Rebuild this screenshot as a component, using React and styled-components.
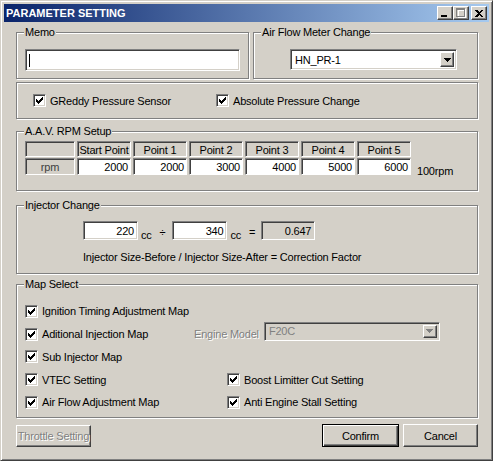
import React from 'react';
import styled, { createGlobalStyle, css } from 'styled-components';

const Global = createGlobalStyle`
  html, body { margin: 0; padding: 0; background: #D4D0C8; }
  body { font-family: "Liberation Sans", Arial, sans-serif; font-size: 11px; }
  * { box-sizing: border-box; }
`;

const sunken = css`
  border: 1px solid;
  border-color: #808080 #ffffff #ffffff #808080;
  box-shadow: inset 1px 1px 0 #404040, inset -1px -1px 0 #D4D0C8;
`;

const raised = css`
  border: 1px solid;
  border-color: #ffffff #404040 #404040 #ffffff;
  box-shadow: inset -1px -1px 0 #808080, inset 1px 1px 0 #D4D0C8;
`;

const Window = styled.div`
  width: 493px;
  height: 461px;
  background: #D4D0C8;
  border: 1px solid;
  border-color: #D4D0C8 #404040 #404040 #D4D0C8;
  box-shadow: inset 1px 1px 0 #ffffff, inset -1px -1px 0 #808080;
  padding: 3px;
  display: flex;
  flex-direction: column;
  color: #000;
  letter-spacing: -0.2px;
`;

const TitleBar = styled.div`
  height: 18px;
  flex: none;
  display: flex;
  align-items: center;
  justify-content: space-between;
  background: linear-gradient(to right, #0A246A, #A6CAF0);
  padding: 0 2px;
`;

const Title = styled.span`
  color: #fff;
  font-weight: bold;
  font-size: 11px;
  letter-spacing: 0;
`;

const Controls = styled.div`
  display: flex;
  align-items: center;
`;

const CtlButton = styled.div`
  width: 16px;
  height: 14px;
  background: #D4D0C8;
  ${raised};
  display: flex;
  align-items: center;
  justify-content: center;
  margin-left: ${p => (p.$gap ? '2px' : '0')};
`;

const Body = styled.div`
  flex: 1;
  display: flex;
  flex-direction: column;
  padding: 10px 11px 0 12px;
`;

const Group = styled.div`
  position: relative;
  height: ${p => p.$h}px;
  margin-top: ${p => p.$mt || 0}px;
  border: 1px solid #808080;
  box-shadow: inset 1px 1px 0 #ffffff, 1px 1px 0 #ffffff;
  padding: ${p => p.$pad || '0'};
  flex: none;
`;

const Legend = styled.span`
  position: absolute;
  top: -7px;
  left: 7px;
  padding: 0 1px;
  background: #D4D0C8;
  line-height: 13px;
`;

const TopRow = styled.div`
  display: grid;
  grid-template-columns: 233px 1fr;
  column-gap: 4px;
`;

const Field = styled.div`
  ${sunken};
  background: ${p => (p.$readonly ? '#D4D0C8' : '#fff')};
  width: ${p => p.$w}px;
  height: ${p => p.$h || 21}px;
  display: flex;
  align-items: center;
  justify-content: ${p => (p.$right ? 'flex-end' : 'flex-start')};
  padding: 0 3px;
  white-space: nowrap;
`;

const Caret = styled.span`
  width: 1px;
  height: 13px;
  background: #000;
`;

const Select = styled.div`
  ${sunken};
  background: ${p => (p.$disabled ? '#D4D0C8' : '#fff')};
  color: ${p => (p.$disabled ? '#808080' : '#000')};
  width: ${p => p.$w}px;
  height: ${p => p.$h}px;
  display: flex;
  align-items: center;
  justify-content: space-between;
  padding: 2px 2px 2px 4px;
  margin-bottom: ${p => p.$mb || 0}px;
`;

const DropButton = styled.div`
  width: 14px;
  height: 100%;
  background: #D4D0C8;
  ${raised};
  display: flex;
  align-items: center;
  justify-content: center;
`;

const CheckRow = styled.div`
  display: flex;
  align-items: center;
  height: 100%;
`;

const CheckItem = styled.div`
  display: flex;
  align-items: center;
  gap: 4px;
  width: ${p => (p.$w ? p.$w + 'px' : 'auto')};
  flex: none;
`;

const Box = styled.div`
  width: 13px;
  height: 13px;
  background: #fff;
  ${sunken};
  display: flex;
  align-items: center;
  justify-content: center;
  flex: none;
`;

const Table = styled.div`
  display: grid;
  grid-template-columns: 50px repeat(6, 54px);
  grid-template-rows: 16px 17px;
  column-gap: 2px;
  row-gap: 1px;
`;

const Cell = styled.div`
  border: 1px solid;
  border-color: #808080 #ffffff #ffffff #808080;
  box-shadow: ${p => (p.$data ? 'inset 1px 1px 0 #404040' : 'inset 1px 1px 0 #404040, inset -1px -1px 0 #D4D0C8')};
  background: ${p => (p.$data ? '#fff' : '#D4D0C8')};
  display: flex;
  align-items: center;
  justify-content: ${p => (p.$data ? 'flex-end' : 'center')};
  padding: ${p => (p.$data ? '1px 2px 0 0' : '1px 0 0 0')};
  white-space: nowrap;
  color: ${p => (p.$muted ? '#404040' : '#000')};
`;

const AavRow = styled.div`
  display: flex;
  align-items: flex-end;
  gap: 6px;
`;

const Unit = styled.span`
  line-height: 13px;
  margin-bottom: ${p => p.$mb || 0}px;
`;

const InjRow = styled.div`
  display: flex;
  align-items: flex-end;
`;

const Sym = styled.span`
  margin: 0 ${p => p.$mr || 0}px ${p => p.$mb || 0}px ${p => p.$ml || 0}px;
  line-height: 13px;
`;

const Note = styled.div`
  margin-top: 11px;
  line-height: 13px;
`;

const MapGrid = styled.div`
  display: flex;
  flex-direction: column;
`;

const MapRow = styled.div`
  display: flex;
  align-items: center;
  height: 22.75px;
`;

const Muted = styled.span`
  color: #808080;
  text-shadow: 1px 1px 0 #fff;
  margin-right: 5px;
`;

const ButtonRow = styled.div`
  display: flex;
  align-items: center;
  margin-top: 6px;
  height: 23px;
`;

const Spacer = styled.div`flex: 1;`;

const PushButton = styled.div`
  width: ${p => p.$w}px;
  height: ${p => p.$h || 23}px;
  background: #D4D0C8;
  display: flex;
  align-items: center;
  justify-content: center;
  margin-left: ${p => p.$ml || 0}px;
  ${p =>
    p.$default
      ? css`
          border: 1px solid #000;
          box-shadow: inset 1px 1px 0 #fff, inset -1px -1px 0 #404040, inset -2px -2px 0 #808080;
        `
      : raised};
  color: ${p => (p.$disabled ? '#808080' : '#000')};
  text-shadow: ${p => (p.$disabled ? '1px 1px 0 #fff' : 'none')};
`;

const Check = () => (
  <Box>
    <svg width="7" height="7" viewBox="0 0 7 7" shapeRendering="crispEdges">
      <path d="M6 0h1v1h-1zM5 1h2v1h-2zM0 2h1v1h-1zM4 2h3v1h-3zM0 3h2v1h-2zM3 3h3v1h-3zM0 4h5v1h-5zM1 5h3v1h-3zM2 6h1v1h-1z" fill="#000" />
    </svg>
  </Box>
);

const Arrow = ({ color = '#000' }) => (
  <svg width="7" height="4" viewBox="0 0 7 4" shapeRendering="crispEdges">
    <path d="M0 0h7v1h-7zM1 1h5v1h-5zM2 2h3v1h-3zM3 3h1v1h-1z" fill={color} />
  </svg>
);

const CheckLabel = ({ children, w }) => (
  <CheckItem $w={w}>
    <Check />
    <span>{children}</span>
  </CheckItem>
);

const heads = ['Start Point', 'Point 1', 'Point 2', 'Point 3', 'Point 4', 'Point 5'];
const vals = ['2000', '2000', '3000', '4000', '5000', '6000'];

export default function App() {
  return (
    <>
      <Global />
      <Window>
        <TitleBar>
          <Title>PARAMETER SETTING</Title>
          <Controls>
            <CtlButton>
              <svg width="10" height="9" viewBox="0 0 10 9" shapeRendering="crispEdges">
                <path d="M1 6h6v2h-6z" fill="#000" />
              </svg>
            </CtlButton>
            <CtlButton>
              <svg width="10" height="10" viewBox="0 0 10 10" shapeRendering="crispEdges">
                <path d="M1 1h8v9h-8zM2 3v6h6v-6z" fill="#fff" fillRule="evenodd" transform="translate(0.5 0)" />
                <path d="M0 0h9v9h-9zM1 2v6h7v-6z" fill="#808080" fillRule="evenodd" />
              </svg>
            </CtlButton>
            <CtlButton $gap>
              <svg width="8" height="7" viewBox="0 0 8 7" shapeRendering="crispEdges">
                <path d="M0 0h2l2 2 2-2h2l-3 3.5 3 3.5h-2l-2-2-2 2h-2l3-3.5z" fill="#000" />
              </svg>
            </CtlButton>
          </Controls>
        </TitleBar>
        <Body>
          <TopRow>
            <Group $h={47} $pad="16px 0 0 8px">
              <Legend>Memo</Legend>
              <Field $w={215} $h={22}>
                <Caret />
              </Field>
            </Group>
            <Group $h={47} $pad="16px 0 0 36px">
              <Legend>Air Flow Meter Change</Legend>
              <Select $w={167} $h={21}>
                <span>HN_PR-1</span>
                <DropButton>
                  <Arrow />
                </DropButton>
              </Select>
            </Group>
          </TopRow>

          <Group $h={37} $mt={3} $pad="0 0 0 16px">
            <CheckRow>
              <CheckLabel w={183}>GReddy Pressure Sensor</CheckLabel>
              <CheckLabel>Absolute Pressure Change</CheckLabel>
            </CheckRow>
          </Group>

          <Group $h={60} $mt={12} $pad="9px 0 0 8px">
            <Legend>A.A.V. RPM Setup</Legend>
            <AavRow>
              <Table>
                <Cell />
                {heads.map(h => (
                  <Cell key={h}>{h}</Cell>
                ))}
                <Cell $muted>rpm</Cell>
                {vals.map((v, i) => (
                  <Cell key={i} $data>
                    {v}
                  </Cell>
                ))}
              </Table>
              <Unit $mb={-3}>100rpm</Unit>
            </AavRow>
          </Group>

          <Group $h={69} $mt={14} $pad="15px 0 0 66px">
            <Legend>Injector Change</Legend>
            <InjRow>
              <Field $w={55} $h={19} $right>220</Field>
              <Sym $ml={3} $mb={-2}>cc</Sym>
              <Sym $ml={8} $mr={7} $mb={1}>÷</Sym>
              <Field $w={55} $h={19} $right>340</Field>
              <Sym $ml={3} $mb={-2}>cc</Sym>
              <Sym $ml={8} $mr={6} $mb={1}>=</Sym>
              <Field $w={54} $h={19} $right $readonly>0.647</Field>
            </InjRow>
            <Note>Injector Size-Before / Injector Size-After = Correction Factor</Note>
          </Group>

          <Group $h={134} $mt={10} $pad="15px 0 0 8px">
            <Legend>Map Select</Legend>
            <MapGrid>
              <MapRow>
                <CheckLabel>Ignition Timing Adjustment Map</CheckLabel>
              </MapRow>
              <MapRow>
                <CheckLabel w={169}>Aditional Injection Map</CheckLabel>
                <Muted>Engine Model</Muted>
                <Select $w={176} $h={19} $mb={6} $disabled>
                  <span>F20C</span>
                  <DropButton>
                    <Arrow color="#808080" />
                  </DropButton>
                </Select>
              </MapRow>
              <MapRow>
                <CheckLabel>Sub Injector Map</CheckLabel>
              </MapRow>
              <MapRow>
                <CheckLabel w={202}>VTEC Setting</CheckLabel>
                <CheckLabel>Boost Limitter Cut Setting</CheckLabel>
              </MapRow>
              <MapRow>
                <CheckLabel w={202}>Air Flow Adjustment Map</CheckLabel>
                <CheckLabel>Anti Engine Stall Setting</CheckLabel>
              </MapRow>
            </MapGrid>
          </Group>

          <ButtonRow>
            <PushButton $w={75} $h={22} $disabled>Throttle Setting</PushButton>
            <Spacer />
            <PushButton $w={77} $default>Confirm</PushButton>
            <PushButton $w={75} $ml={4}>Cancel</PushButton>
          </ButtonRow>
        </Body>
      </Window>
    </>
  );
}
